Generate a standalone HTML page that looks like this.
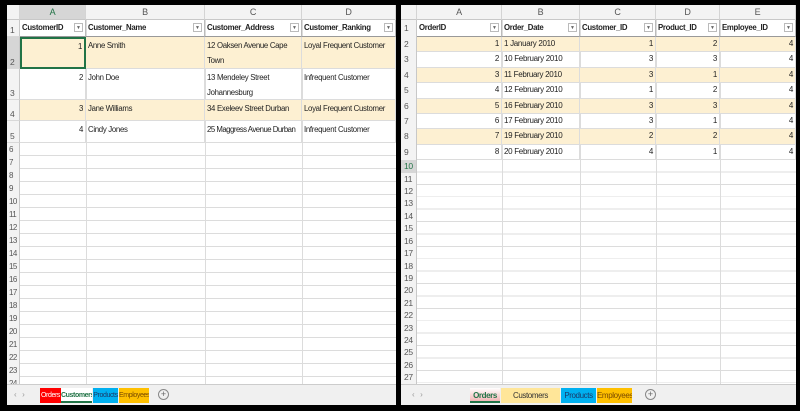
<!DOCTYPE html>
<html><head><meta charset="utf-8"><style>
*{margin:0;padding:0;box-sizing:border-box}
body{width:800px;height:411px;background:#000;position:relative;overflow:hidden;font-family:"Liberation Sans",sans-serif;font-size:8px;letter-spacing:-0.3px;color:#222}
.p{position:absolute;background:#fff;overflow:hidden}
.a{position:absolute;white-space:nowrap}
.ch{background:#f3f3f3;color:#555;text-align:center;border-right:1px solid #d4d4d4;border-bottom:1px solid #c8c8c8;font-size:9px;line-height:15px}
.rh{background:#f3f3f3;color:#555;border-right:1px solid #c8c8c8;border-bottom:1px solid #d8d8d8;padding-left:3px;font-size:8.5px}
.c{border-right:1px solid #dcdcdc;border-bottom:1px solid #dcdcdc;padding:1px 2px;font-size:7.8px;line-height:15px;overflow:hidden;white-space:normal}
.h{font-weight:bold;font-size:7.8px;line-height:16px;padding-left:2px;border-right:1px solid #bbb;border-bottom:1px solid #999}
.dd{position:absolute;right:2px;top:3px;width:9px;height:9px;border:1px solid #bbb;background:#fff;font-size:5px;line-height:8px;text-align:center;color:#666;font-weight:normal;letter-spacing:0}
.y{background:#fdf0d2}
.r{text-align:right}
.tab{position:absolute;top:388px;height:15px;font-size:7px;letter-spacing:-0.4px;line-height:15px;text-align:center;overflow:hidden;white-space:nowrap}
.bar{position:absolute;top:384px;height:21px;background:#f0f0f0;border-top:1px solid #ccc}
</style></head><body>

<!-- LEFT PANEL -->
<div class="p" style="left:7px;top:5px;width:389px;height:400px">
 <div style="position:absolute;left:0;top:138px;width:389px;height:246px;background:
  repeating-linear-gradient(to bottom,transparent 0,transparent 12px,#dcdcdc 12px,#dcdcdc 13px),#fff"></div>
 <div style="position:absolute;left:79px;top:0;width:1px;height:384px;background:#dcdcdc"></div>
 <div style="position:absolute;left:198px;top:0;width:1px;height:384px;background:#dcdcdc"></div>
 <div style="position:absolute;left:295px;top:0;width:1px;height:384px;background:#dcdcdc"></div>
 <div class="a ch" style="left:0;top:0;width:13px;height:15px"></div>
 <div class="a ch" style="left:13px;top:0;width:66px;height:15px;background:#d6d6d6;color:#217346">A</div>
 <div class="a ch" style="left:79px;top:0;width:119px;height:15px">B</div>
 <div class="a ch" style="left:198px;top:0;width:97px;height:15px">C</div>
 <div class="a ch" style="left:295px;top:0;width:94px;height:15px">D</div>
 <div class="a rh" style="left:0;top:15px;width:13px;height:17px;line-height:20px">1</div>
 <div class="a rh" style="left:0;top:32px;width:13px;height:32px;line-height:50px;background:#d6d6d6">2</div>
 <div class="a rh" style="left:0;top:64px;width:13px;height:31px;line-height:48px">3</div>
 <div class="a rh" style="left:0;top:95px;width:13px;height:21px;line-height:28px">4</div>
 <div class="a rh" style="left:0;top:116px;width:13px;height:22px;line-height:30px">5</div>
 <div class="a" style="left:0;top:138px;width:13px;line-height:13px;font-size:8px;letter-spacing:-0.6px;color:#555;background:#f3f3f3;padding-left:2px;height:246px;border-right:1px solid #c8c8c8">6<br>7<br>8<br>9<br>10<br>11<br>12<br>13<br>14<br>15<br>16<br>17<br>18<br>19<br>20<br>21<br>22<br>23<br>24</div>
 <div class="a h" style="left:13px;top:15px;width:66px;height:17px">CustomerID<span class="dd">▼</span></div>
 <div class="a h" style="left:79px;top:15px;width:119px;height:17px">Customer_Name<span class="dd">▼</span></div>
 <div class="a h" style="left:198px;top:15px;width:97px;height:17px">Customer_Address<span class="dd">▼</span></div>
 <div class="a h" style="left:295px;top:15px;width:94px;height:17px">Customer_Ranking<span class="dd">▼</span></div>
 <div class="a c y r" style="left:13px;top:32px;width:66px;height:32px;border:2px solid #217346;padding-top:0">1</div>
 <div class="a c y" style="left:79px;top:32px;width:119px;height:32px">Anne Smith</div>
 <div class="a c y" style="left:198px;top:32px;width:97px;height:32px">12 Oaksen Avenue Cape Town</div>
 <div class="a c y" style="left:295px;top:32px;width:94px;height:32px">Loyal Frequent Customer</div>
 <div class="a c r" style="left:13px;top:64px;width:66px;height:31px">2</div>
 <div class="a c" style="left:79px;top:64px;width:119px;height:31px">John Doe</div>
 <div class="a c" style="left:198px;top:64px;width:97px;height:31px">13 Mendeley Street Johannesburg</div>
 <div class="a c" style="left:295px;top:64px;width:94px;height:31px">Infrequent Customer</div>
 <div class="a c y r" style="left:13px;top:95px;width:66px;height:21px">3</div>
 <div class="a c y" style="left:79px;top:95px;width:119px;height:21px">Jane Williams</div>
 <div class="a c y" style="left:198px;top:95px;width:97px;height:21px;white-space:nowrap">34 Exeleev Street Durban</div>
 <div class="a c y" style="left:295px;top:95px;width:94px;height:21px;white-space:nowrap">Loyal Frequent Customer</div>
 <div class="a c r" style="left:13px;top:116px;width:66px;height:22px">4</div>
 <div class="a c" style="left:79px;top:116px;width:119px;height:22px">Cindy Jones</div>
 <div class="a c" style="left:198px;top:116px;width:97px;height:22px;white-space:nowrap;letter-spacing:-0.5px">25 Maggress Avenue Durban</div>
 <div class="a c" style="left:295px;top:116px;width:94px;height:22px">Infrequent Customer</div>
</div>
<div class="bar" style="left:7px;width:389px"></div>
<div class="a" style="left:14px;top:390px;color:#999;font-size:8px">‹ &nbsp; ›</div>
<div class="tab" style="left:40px;width:21px;background:#f00;color:#fff">Orders</div>
<div class="tab" style="left:61px;width:31px;background:#fff;color:#217346;font-weight:bold;border-bottom:2px solid #217346">Customers</div>
<div class="tab" style="left:93px;width:25px;background:#00b0f0;color:#1a3a6a">Products</div>
<div class="tab" style="left:119px;width:30px;background:#ffc000;color:#7a4a00">Employees</div>
<div class="a" style="left:158px;top:389px;width:11px;height:11px;border:1px solid #888;border-radius:50%;text-align:center;line-height:9px;color:#666;font-size:9px;letter-spacing:0">+</div>

<!-- RIGHT PANEL -->
<div class="p" style="left:401px;top:5px;width:395px;height:400px">
 <div style="position:absolute;left:0;top:155px;width:395px;height:229px;background:
  repeating-linear-gradient(to bottom,transparent 0,transparent 11.5px,#dcdcdc 11.5px,#dcdcdc 12.4px),#fff"></div>
 <div style="position:absolute;left:101px;top:0;width:1px;height:384px;background:#dcdcdc"></div>
 <div style="position:absolute;left:179px;top:0;width:1px;height:384px;background:#dcdcdc"></div>
 <div style="position:absolute;left:255px;top:0;width:1px;height:384px;background:#dcdcdc"></div>
 <div style="position:absolute;left:319px;top:0;width:1px;height:384px;background:#dcdcdc"></div>
 <div class="a ch" style="left:0;top:0;width:16px;height:15px"></div>
 <div class="a ch" style="left:16px;top:0;width:85px;height:15px">A</div>
 <div class="a ch" style="left:101px;top:0;width:78px;height:15px">B</div>
 <div class="a ch" style="left:179px;top:0;width:76px;height:15px">C</div>
 <div class="a ch" style="left:255px;top:0;width:64px;height:15px">D</div>
 <div class="a ch" style="left:319px;top:0;width:76px;height:15px">E</div>
 <div class="a" style="left:0;top:15px;width:16px;height:369px;background:#f3f3f3;border-right:1px solid #c8c8c8;color:#555;padding-left:3px;font-size:8.5px">
  <div style="line-height:17px">1</div>
  <div style="line-height:15.4px">2<br>3<br>4<br>5<br>6<br>7<br>8<br>9</div>
  <div style="line-height:12.4px;background:#d6d6d6;color:#217346;margin-left:-3px;padding-left:3px">10</div>
  <div style="line-height:12.4px">11<br>12<br>13<br>14<br>15<br>16<br>17<br>18<br>19<br>20<br>21<br>22<br>23<br>24<br>25<br>26<br>27</div>
 </div>
 <div class="a h" style="left:16px;top:15px;width:85px;height:17px">OrderID<span class="dd">▼</span></div>
 <div class="a h" style="left:101px;top:15px;width:78px;height:17px">Order_Date<span class="dd">▼</span></div>
 <div class="a h" style="left:179px;top:15px;width:76px;height:17px">Customer_ID<span class="dd">▼</span></div>
 <div class="a h" style="left:255px;top:15px;width:64px;height:17px">Product_ID<span class="dd">▼</span></div>
 <div class="a h" style="left:319px;top:15px;width:76px;height:17px">Employee_ID<span class="dd">▼</span></div>
 <div class="a" style="left:16px;top:32px;width:379px">
  <style>.g{display:flex;height:15.4px}.g div{border-right:1px solid #dcdcdc;border-bottom:1px solid #dcdcdc;font-size:8px;line-height:14px;padding:0 2px}.g .r{text-align:right}</style>
  <div class="g y"><div class="r" style="width:85px">1</div><div style="width:78px">1 January 2010</div><div class="r" style="width:76px">1</div><div class="r" style="width:64px">2</div><div class="r" style="width:76px">4</div></div>
  <div class="g"><div class="r" style="width:85px">2</div><div style="width:78px">10 February 2010</div><div class="r" style="width:76px">3</div><div class="r" style="width:64px">3</div><div class="r" style="width:76px">4</div></div>
  <div class="g y"><div class="r" style="width:85px">3</div><div style="width:78px">11 February 2010</div><div class="r" style="width:76px">3</div><div class="r" style="width:64px">1</div><div class="r" style="width:76px">4</div></div>
  <div class="g"><div class="r" style="width:85px">4</div><div style="width:78px">12 February 2010</div><div class="r" style="width:76px">1</div><div class="r" style="width:64px">2</div><div class="r" style="width:76px">4</div></div>
  <div class="g y"><div class="r" style="width:85px">5</div><div style="width:78px">16 February 2010</div><div class="r" style="width:76px">3</div><div class="r" style="width:64px">3</div><div class="r" style="width:76px">4</div></div>
  <div class="g"><div class="r" style="width:85px">6</div><div style="width:78px">17 February 2010</div><div class="r" style="width:76px">3</div><div class="r" style="width:64px">1</div><div class="r" style="width:76px">4</div></div>
  <div class="g y"><div class="r" style="width:85px">7</div><div style="width:78px">19 February 2010</div><div class="r" style="width:76px">2</div><div class="r" style="width:64px">2</div><div class="r" style="width:76px">4</div></div>
  <div class="g"><div class="r" style="width:85px">8</div><div style="width:78px">20 February 2010</div><div class="r" style="width:76px">4</div><div class="r" style="width:64px">1</div><div class="r" style="width:76px">4</div></div>
 </div>
</div>
<div class="bar" style="left:401px;width:395px"></div>
<div class="a" style="left:412px;top:390px;color:#999;font-size:8px">‹ &nbsp; ›</div>
<div class="tab" style="left:470px;width:30px;background:linear-gradient(#fff,#f4b6b6);color:#217346;font-weight:bold;border-bottom:2px solid #217346;font-size:8px">Orders</div>
<div class="tab" style="left:501px;width:59px;background:#ffe699;color:#333;font-size:8px">Customers</div>
<div class="tab" style="left:561px;width:35px;background:#00b0f0;color:#1a3a6a;font-size:8px">Products</div>
<div class="tab" style="left:597px;width:35px;background:#ffc000;color:#7a4a00;font-size:8px">Employees</div>
<div class="a" style="left:645px;top:389px;width:11px;height:11px;border:1px solid #888;border-radius:50%;text-align:center;line-height:9px;color:#666;font-size:9px;letter-spacing:0">+</div>
</body></html>
